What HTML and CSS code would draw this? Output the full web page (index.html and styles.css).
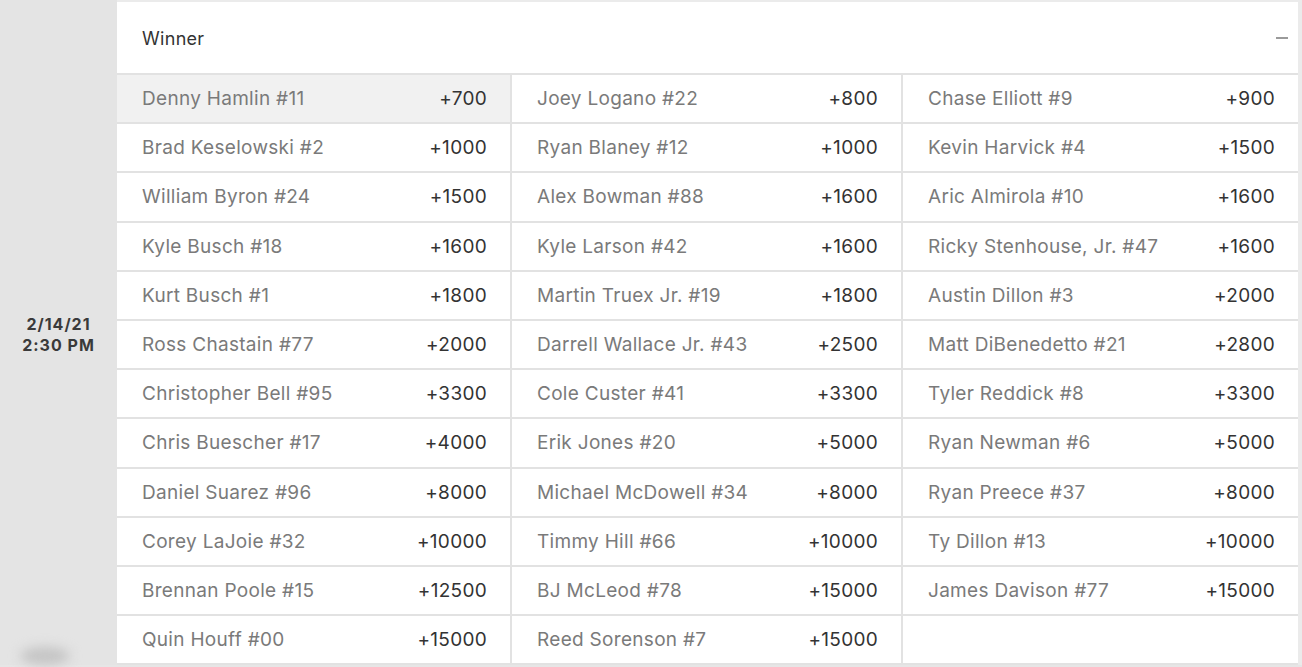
FILE: index.html
```html
<!DOCTYPE html>
<html>
<head>
<meta charset="utf-8">
<link rel="stylesheet" href="styles.css">
</head>
<body>
<div class="event">
  <div class="date">
    <div class="date-text">2/14/21<br>2:30 PM</div>
    <div class="blob"></div>
  </div>
  <div class="market">
    <div class="market-head">
      <span class="market-title">Winner</span>
      <span class="collapse"></span>
    </div>
    <div class="grid">
      <div class="cell active"><span class="name">Denny Hamlin #11</span><span class="odds">+700</span></div>
      <div class="cell"><span class="name">Joey Logano #22</span><span class="odds">+800</span></div>
      <div class="cell last"><span class="name">Chase Elliott #9</span><span class="odds">+900</span></div>
      <div class="cell"><span class="name">Brad Keselowski #2</span><span class="odds">+1000</span></div>
      <div class="cell"><span class="name">Ryan Blaney #12</span><span class="odds">+1000</span></div>
      <div class="cell last"><span class="name">Kevin Harvick #4</span><span class="odds">+1500</span></div>
      <div class="cell"><span class="name">William Byron #24</span><span class="odds">+1500</span></div>
      <div class="cell"><span class="name">Alex Bowman #88</span><span class="odds">+1600</span></div>
      <div class="cell last"><span class="name">Aric Almirola #10</span><span class="odds">+1600</span></div>
      <div class="cell"><span class="name">Kyle Busch #18</span><span class="odds">+1600</span></div>
      <div class="cell"><span class="name">Kyle Larson #42</span><span class="odds">+1600</span></div>
      <div class="cell last"><span class="name">Ricky Stenhouse, Jr. #47</span><span class="odds">+1600</span></div>
      <div class="cell"><span class="name">Kurt Busch #1</span><span class="odds">+1800</span></div>
      <div class="cell"><span class="name">Martin Truex Jr. #19</span><span class="odds">+1800</span></div>
      <div class="cell last"><span class="name">Austin Dillon #3</span><span class="odds">+2000</span></div>
      <div class="cell"><span class="name">Ross Chastain #77</span><span class="odds">+2000</span></div>
      <div class="cell"><span class="name">Darrell Wallace Jr. #43</span><span class="odds">+2500</span></div>
      <div class="cell last"><span class="name">Matt DiBenedetto #21</span><span class="odds">+2800</span></div>
      <div class="cell"><span class="name">Christopher Bell #95</span><span class="odds">+3300</span></div>
      <div class="cell"><span class="name">Cole Custer #41</span><span class="odds">+3300</span></div>
      <div class="cell last"><span class="name">Tyler Reddick #8</span><span class="odds">+3300</span></div>
      <div class="cell"><span class="name">Chris Buescher #17</span><span class="odds">+4000</span></div>
      <div class="cell"><span class="name">Erik Jones #20</span><span class="odds">+5000</span></div>
      <div class="cell last"><span class="name">Ryan Newman #6</span><span class="odds">+5000</span></div>
      <div class="cell"><span class="name">Daniel Suarez #96</span><span class="odds">+8000</span></div>
      <div class="cell"><span class="name">Michael McDowell #34</span><span class="odds">+8000</span></div>
      <div class="cell last"><span class="name">Ryan Preece #37</span><span class="odds">+8000</span></div>
      <div class="cell"><span class="name">Corey LaJoie #32</span><span class="odds">+10000</span></div>
      <div class="cell"><span class="name">Timmy Hill #66</span><span class="odds">+10000</span></div>
      <div class="cell last"><span class="name">Ty Dillon #13</span><span class="odds">+10000</span></div>
      <div class="cell"><span class="name">Brennan Poole #15</span><span class="odds">+12500</span></div>
      <div class="cell"><span class="name">BJ McLeod #78</span><span class="odds">+15000</span></div>
      <div class="cell last"><span class="name">James Davison #77</span><span class="odds">+15000</span></div>
      <div class="cell"><span class="name">Quin Houff #00</span><span class="odds">+15000</span></div>
      <div class="cell"><span class="name">Reed Sorenson #7</span><span class="odds">+15000</span></div>
      <div class="cell last empty"></div>
    </div>
  </div>
</div>
</body>
</html>
```

FILE: styles.css
```css
html, body {
  margin: 0;
  padding: 0;
}
body {
  background: #ffffff;
  font-family: Inter, "Noto Sans", sans-serif;
  width: 1302px;
  height: 667px;
  overflow: hidden;
}
.event {
  display: flex;
  background: #ebebeb;
  border-bottom: 2px solid #e6e6e6;
}
.date {
  position: relative;
  width: 117px;
  flex: none;
  background: #e4e4e4;
  display: flex;
  align-items: center;
  justify-content: center;
}
.date-text {
  font-size: 16px;
  font-weight: 700;
  letter-spacing: 1px;
  color: #3a3a3a;
  text-align: center;
  line-height: 21px;
  margin-top: 5px;
}
.blob {
  position: absolute;
  left: 20px;
  bottom: 0;
  width: 50px;
  height: 18px;
  border-radius: 50%;
  background: #c4c4c4;
  filter: blur(6px);
}
.market {
  width: 1181px;
  flex: none;
  background: #fff;
  margin-top: 2px;
}
.market-head {
  height: 71px;
  display: flex;
  align-items: center;
  justify-content: space-between;
  padding: 0 10px 0 25px;
  border-bottom: 2px solid #e2e2e2;
}
.market-title {
  font-size: 18px;
  letter-spacing: 0.3px;
  color: #333;
  margin-top: 1px;
}
.collapse {
  width: 12px;
  height: 1.5px;
  background: #9a9a9a;
  margin-top: 1px;
}
.grid {
  display: grid;
  grid-template-columns: 395px 391px 395px;
}
.cell {
  height: 47.2px;
  display: flex;
  align-items: center;
  justify-content: space-between;
  padding: 0 23px 0 25px;
  border-bottom: 2px solid #e2e2e2;
  border-right: 2px solid #e2e2e2;
  font-size: 19px;
}
.cell.last {
  border-right: none;
  padding-right: 23px;
}
.cell.active {
  background: #f1f1f1;
}
.name {
  color: #7a7a7a;
  letter-spacing: 0.3px;
}
.odds {
  color: #333;
  letter-spacing: 0.3px;
}
```
